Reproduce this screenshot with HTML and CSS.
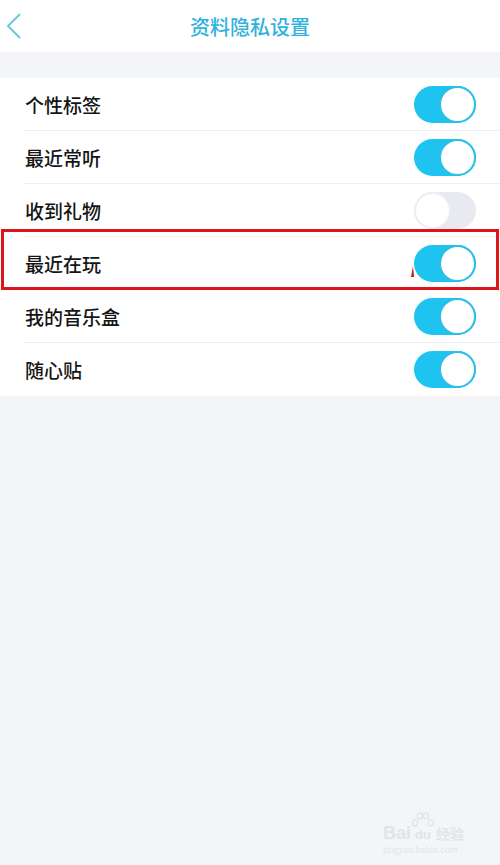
FILE: index.html
```html
<!DOCTYPE html>
<html lang="zh-CN">
<head>
    <meta charset="UTF-8">
    <meta name="viewport" content="width=device-width, initial-scale=1.0">
    <title>资料隐私设置</title>
    <link rel="stylesheet" href="styles.css">
</head>
<body>
    <!-- Top bar -->
    <header class="topbar">
        <svg class="back" width="16" height="28" viewBox="0 0 16 28">
            <path d="M14 2 L2 14 L14 26" fill="none" stroke="#6cc6df" stroke-width="2"/>
        </svg>
        <h1 class="title">资料隐私设置</h1>
    </header>

    <div class="gap"></div>

    <!-- Privacy switches -->
    <ul class="list">
        <li class="row"><span class="label">个性标签</span><span class="switch on"></span></li>
        <li class="row"><span class="label">最近常听</span><span class="switch on"></span></li>
        <li class="row"><span class="label">收到礼物</span><span class="switch"></span></li>
        <li class="row"><span class="label">最近在玩</span><span class="switch on"></span></li>
        <li class="row"><span class="label">我的音乐盒</span><span class="switch on"></span></li>
        <li class="row"><span class="label">随心贴</span><span class="switch on"></span></li>
    </ul>

    <!-- Annotation -->
    <div class="highlight"></div>
    <div class="mark"></div>

    <!-- Watermark -->
    <div class="watermark">
        <div class="wm-logo">
            <span>Bai</span>
            <span class="wm-paw">
                <svg width="24" height="16" viewBox="0 0 24 16">
                    <g fill="none" stroke="#e2e4ea" stroke-width="1.5">
                        <ellipse cx="4" cy="11" rx="2.5" ry="3"/>
                        <ellipse cx="9" cy="4" rx="2.5" ry="3"/>
                        <ellipse cx="15" cy="4" rx="2.5" ry="3"/>
                        <ellipse cx="20" cy="11" rx="2.5" ry="3"/>
                    </g>
                </svg>
                <span class="wm-du">du</span>
            </span>
            <span class="wm-cn">经验</span>
        </div>
        <div class="wm-url">jingyan.baidu.com</div>
    </div>
</body>
</html>
```

FILE: styles.css
```css
body {
    margin: 0;
    width: 500px;
    height: 865px;
    background-color: #f4f5f9;
    font-family: "Noto Sans CJK SC", "Noto Sans", sans-serif;
    position: relative;
    overflow: hidden;
}

.topbar {
    height: 52px;
    background-color: #fff;
    display: flex;
    align-items: center;
    justify-content: center;
    position: relative;
}

.back {
    position: absolute;
    left: 6px;
    top: 12px;
}

.title {
    margin: 0;
    font-size: 20px;
    font-weight: 500;
    color: #2fb2de;
}

.gap {
    height: 26px;
}

.list {
    list-style: none;
    margin: 0;
    padding: 0 0 0 24px;
    background-color: #fff;
}

.row {
    height: 53px;
    box-sizing: border-box;
    display: flex;
    align-items: center;
    justify-content: space-between;
    padding: 0 24px 0 1px;
    border-bottom: 1px solid #eff0f3;
}

.row:last-child {
    border-bottom: none;
}

.label {
    font-size: 19px;
    font-weight: 500;
    color: #151515;
}

/* Switch */
.switch {
    width: 62px;
    height: 37px;
    border-radius: 19px;
    background-color: #e9eaf1;
    position: relative;
    box-sizing: border-box;
}

.switch::after {
    content: "";
    position: absolute;
    left: 0;
    top: 0;
    width: 37px;
    height: 37px;
    border-radius: 50%;
    background-color: #fff;
    box-sizing: border-box;
    border: 2px solid #eceef3;
}

.switch.on {
    background-color: #1ec3f0;
}

.switch.on::after {
    left: 25px;
    border-color: #2cc0e6;
}

/* Red annotation frame */
.highlight {
    position: absolute;
    left: 1px;
    top: 229px;
    width: 498px;
    height: 61px;
    box-sizing: border-box;
    border: 3px solid #dd1418;
}

.mark {
    position: absolute;
    left: 411px;
    top: 266px;
    width: 0;
    height: 0;
    border-left: 2px solid transparent;
    border-right: 1px solid transparent;
    border-bottom: 11px solid #c81a1a;
}

/* Watermark */
.watermark {
    position: absolute;
    left: 383px;
    top: 812px;
    width: 90px;
    color: #e2e4ea;
}

.wm-logo {
    display: flex;
    align-items: flex-end;
    font-family: "Liberation Sans", sans-serif;
    font-size: 18px;
    font-weight: bold;
    line-height: 18px;
}

.wm-paw {
    display: flex;
    flex-direction: column;
    align-items: center;
    width: 24px;
}

.wm-du {
    font-size: 13px;
    line-height: 14px;
}

.wm-cn {
    font-family: "Noto Sans CJK SC", sans-serif;
    font-size: 14px;
    line-height: 18px;
    margin-left: 1px;
}

.wm-url {
    font-family: "Liberation Serif", serif;
    font-size: 10px;
    line-height: 12px;
    margin-top: 2px;
}
```
